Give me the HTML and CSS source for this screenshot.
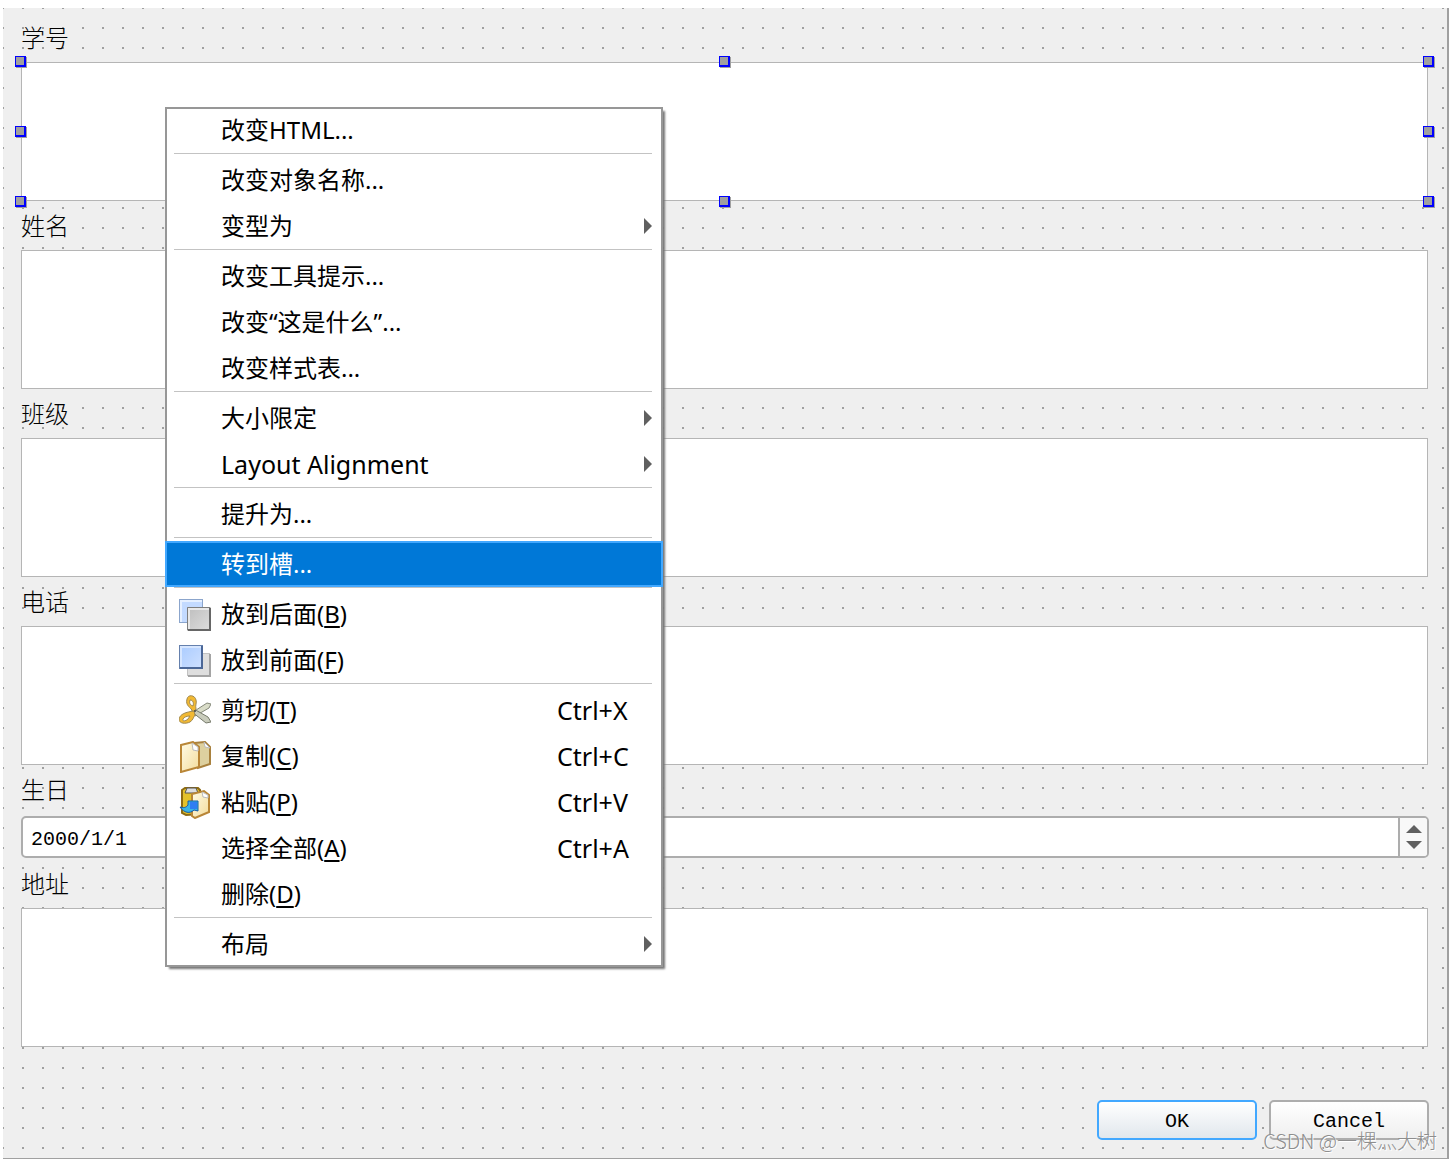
FILE: index.html
```html
<!DOCTYPE html>
<html lang="zh-CN">
<head>
<meta charset="utf-8">
<title>学生信息</title>
<link rel="stylesheet" href="styles.css">
</head>
<body>
<form class="dialog">
  <div class="fields">
    <label for="f-id">学号</label>
    <div class="selected">
      <textarea id="f-id" class="box"></textarea>
      <i class="handle left top"></i><i class="handle center top"></i><i class="handle right top"></i>
      <i class="handle left middle"></i><i class="handle right middle"></i>
      <i class="handle left bottom"></i><i class="handle center bottom"></i><i class="handle right bottom"></i>
    </div>
    <label for="f-name">姓名</label>
    <textarea id="f-name" class="box"></textarea>
    <label for="f-class">班级</label>
    <textarea id="f-class" class="box"></textarea>
    <label for="f-phone">电话</label>
    <textarea id="f-phone" class="box"></textarea>
    <label for="f-birth">生日</label>
    <div class="date">
      <input id="f-birth" type="text" value="2000/1/1">
      <div class="spin">
        <button type="button" aria-label="增加"><svg width="16" height="8"><path d="M0 8L8 0l8 8z"/></svg></button>
        <button type="button" aria-label="减少"><svg width="16" height="8"><path d="M0 0h16L8 8z"/></svg></button>
      </div>
    </div>
    <label for="f-addr">地址</label>
    <textarea id="f-addr" class="box"></textarea>
  </div>
  <div class="actions">
    <button type="button" class="btn primary">OK</button>
    <button type="button" class="btn">Cancel</button>
  </div>
</form>

<div class="menu" role="menu">
  <button class="item" role="menuitem"><span class="text">改变HTML...</span></button>
  <hr>
  <button class="item" role="menuitem"><span class="text">改变对象名称...</span></button>
  <button class="item" role="menuitem"><span class="text">变型为</span><svg class="arrow" width="8" height="16"><path d="M0 0l8 8-8 8z"/></svg></button>
  <hr>
  <button class="item" role="menuitem"><span class="text">改变工具提示...</span></button>
  <button class="item" role="menuitem"><span class="text">改变“这是什么”...</span></button>
  <button class="item" role="menuitem"><span class="text">改变样式表...</span></button>
  <hr>
  <button class="item" role="menuitem"><span class="text">大小限定</span><svg class="arrow" width="8" height="16"><path d="M0 0l8 8-8 8z"/></svg></button>
  <button class="item" role="menuitem"><span class="text latin">Layout Alignment</span><svg class="arrow" width="8" height="16"><path d="M0 0l8 8-8 8z"/></svg></button>
  <hr>
  <button class="item" role="menuitem"><span class="text">提升为...</span></button>
  <hr>
  <button class="item active" role="menuitem"><span class="text">转到槽...</span></button>
  <hr>
  <button class="item" role="menuitem">
    <svg class="icon" viewBox="0 0 32 32">
      <defs>
        <linearGradient id="blue" x2="1" y2="1"><stop stop-color="#a9cbff"/><stop offset="1" stop-color="#cfe1ff"/></linearGradient>
        <linearGradient id="grey" x2="1" y2="1"><stop stop-color="#bdbdbd"/><stop offset="1" stop-color="#dedede"/></linearGradient>
        <linearGradient id="paper" x2="1" y2="1"><stop stop-color="#fffbe6"/><stop offset="1" stop-color="#f3dc9c"/></linearGradient>
      </defs>
      <rect x=".5" y=".5" width="23" height="23" fill="#c3daff" stroke="#8ba5cc"/>
      <path d="M2 23V2h21" fill="none" stroke="#e6f0ff" stroke-width="2"/>
      <rect x="8" y="8" width="24" height="24" fill="url(#grey)"/>
      <path d="M10 30V10h20" fill="none" stroke="#e8e8e8" stroke-width="2"/>
      <path d="M8.500 31V8.500H31" fill="none" stroke="#7e7e7e"/><path d="M9 31h22V9" fill="none" stroke="#666" stroke-width="2"/>
    </svg>
    <span class="text">放到后面(<u>B</u>)</span></button>
  <button class="item" role="menuitem">
    <svg class="icon" viewBox="0 0 32 32">
      <rect x="8.500" y="8.500" width="22" height="22" fill="#dedede" stroke="#c2c2c2"/><path d="M9 31h22V9" fill="none" stroke="#a4a4a4" stroke-width="2"/>
      <rect x=".5" y=".5" width="23" height="23" fill="url(#blue)" stroke="#6580ad"/>
      <path d="M2 22V2h20" fill="none" stroke="#d6e6ff" stroke-width="2"/>
      <path d="M1 23h22V1" fill="none" stroke="#4b6797" stroke-width="2"/>
    </svg>
    <span class="text">放到前面(<u>F</u>)</span></button>
  <hr>
  <button class="item" role="menuitem">
    <svg class="icon" viewBox="0 0 32 32">
      <path d="M14 17L28 8l4 1-2 4-14 8z" fill="#d9dcc8" stroke="#84887a"/>
      <path d="M13 13l16 9 3 5-5 1-14-11z" fill="#c9ccbc" stroke="#777b6c"/>
      <path d="M8 4c1-5 8-4 9 1 1 3-1 5 0 9l-3 3c-2-5-8-6-6-13zm3 1c-1 3 0 5 3 6 1-3 0-6-3-6z" fill="#f2b933" stroke="#a08a52" fill-rule="evenodd"/>
      <path d="M0 24c1-5 7-7 15-8l1 4c-2 3-2 5-5 7-4 2-11 2-11-3zm4 0c-1 3 3 2 5 0l2-3c-3 0-6 1-7 3z" fill="#f2b933" stroke="#a08a52" fill-rule="evenodd"/>
      <circle cx="16" cy="16" r="1" fill="#444"/>
    </svg>
    <span class="text">剪切(<u>T</u>)</span><span class="key latin">Ctrl+X</span></button>
  <button class="item" role="menuitem">
    <svg class="icon" viewBox="0 0 32 32">
      <path d="M15 2l11-1 5 5v17l-12 4z" fill="#ddd09f" stroke="#a9813e" stroke-width="2"/><path d="M25 1l1 5 5 1z" fill="#fff" stroke="#bbb"/>
      <path d="M2 4L14 1l6 5v20L2 31z" fill="url(#paper)" stroke="#b98637" stroke-width="2"/><path d="M13 2l1 7 5 1V6z" fill="#fff" stroke="#bbb"/>
    </svg>
    <span class="text">复制(<u>C</u>)</span><span class="key latin">Ctrl+C</span></button>
  <button class="item" role="menuitem">
    <svg class="icon" viewBox="0 0 32 32">
      <path d="M3 3l3-2h13l2 2v24l-14 1-4-2z" fill="#e4c22a" stroke="#8d6a13" stroke-width="2"/><path d="M6 6l2-5h9l2 5z" fill="#ddd" stroke="#555"/>
      <path d="M13 7l12-3 5 4v17l-14 6-3-2z" fill="url(#paper)" stroke="#b98637" stroke-width="2"/><path d="M23 5l1 5 5 1V8z" fill="#fff" stroke="#bbb"/>
      <path d="M1 20c3 1 6 1 8-2V14h10v10l-4-1c-4 4-10 3-14-3z" fill="#39b4e6" stroke="#155aa5"/><path d="M11 15h7v7h-7z" fill="#2f7df2"/>
    </svg>
    <span class="text">粘贴(<u>P</u>)</span><span class="key latin">Ctrl+V</span></button>
  <button class="item" role="menuitem"><span class="text">选择全部(<u>A</u>)</span><span class="key latin">Ctrl+A</span></button>
  <button class="item" role="menuitem"><span class="text">删除(<u>D</u>)</span></button>
  <hr>
  <button class="item" role="menuitem"><span class="text">布局</span><svg class="arrow" width="8" height="16"><path d="M0 0l8 8-8 8z"/></svg></button>
</div>
<div class="watermark">CSDN @一棵灬大树</div>
</body>
</html>
```
FILE: styles.css
```css
* { box-sizing: border-box; }
body {
  margin: 0;
  padding: 8px 2px 0 3px;
  position: relative;
  background: #fff;
  color: #000;
}
button, input, textarea { font: inherit; color: inherit; border: 0; padding: 0; margin: 0; }
.dialog {
  padding: 17px 18px 18px 18px;
  border-right: 2px solid #a0a0a0;
  border-bottom: 1px solid #a0a0a0;
  background: #efefef conic-gradient(at 2px 2px, transparent 75%, #a0a0a0 0) -1px -1px / 20px 20px;
  font: 300 24px/25px "Liberation Mono", "Noto Sans CJK SC", monospace;
}
.fields { display: flex; flex-direction: column; gap: 12px; }
.fields label { align-self: flex-start; height: 25px; line-height: 31px; }
.box {
  display: block;
  width: calc(100% - 1px);
  height: 139px;
  border: 1px solid #b5b5b5;
  background: #fff;
  resize: none;
  outline: 0;
}
.selected { position: relative; }
.handle {
  position: absolute;
  width: 11px;
  height: 11px;
  background: #a0a0a0;
  border: solid #00f;
  border-width: 1px 2px 2px 1px;
  box-shadow: 1px 1px #a0a0a0;
}
.left { left: -6px; }
.center { left: calc(50% - 6px); }
.right { right: -5px; }
.top { top: -6px; }
.middle { top: calc(50% - 6px); }
.bottom { bottom: -6px; }
.date {
  display: flex;
  height: 42px;
  margin: 2px 0 1px;
  border: 2px solid #adadad;
  border-radius: 5px;
  background: #fff;
  overflow: hidden;
}
.date input { flex: 1; min-width: 0; padding: 4px 0 0 8px; font-size: 20px; background: none; outline: 0; }
.spin {
  width: 29px;
  display: flex;
  flex-direction: column;
  justify-content: center;
  gap: 8px;
  border-left: 2px solid #adadad;
  background: #f8f8f8;
}
.spin button { display: flex; justify-content: center; background: none; fill: #606060; }
.actions { display: flex; justify-content: flex-end; gap: 12px; margin-top: 53px; }
.btn {
  width: 160px;
  height: 40px;
  padding-top: 3px;
  border: 2px solid #adadad;
  border-radius: 5px;
  background: linear-gradient(#fff, #efefef);
  font-size: 20px;
}
.primary { border-color: #42a8ff; background: linear-gradient(#fff, #e1e7ed); }
.menu {
  position: absolute;
  left: 165px;
  top: 107px;
  width: 498px;
  background: #fff;
  box-shadow: inset 0 0 0 2px #979797, 3px 3px 2px -1px #777;
  font: 24px/46px "Noto Sans", "Noto Sans CJK SC", sans-serif;
}
.menu hr { height: 4px; margin: 0 11px 0 9px; border: 0; border-top: 1px solid #c3c3c3; }
.item {
  display: grid;
  grid-template-columns: 32px 1fr 77px 8px;
  column-gap: 10px;
  align-items: center;
  width: 100%;
  height: 46px;
  padding: 0 11px 0 14px;
  background: none;
  text-align: left;
  white-space: nowrap;
}
.icon { grid-column: 1; grid-row: 1; width: 32px; height: 32px; margin-top: 2px; }
.text { grid-column: 2; grid-row: 1; }
.text u { text-decoration-thickness: 2px; text-underline-offset: 3px; text-decoration-skip-ink: none; }
.key { grid-column: 3; grid-row: 1; }
.latin { font-size: 25px; }
.arrow { grid-column: 4; grid-row: 1; fill: #606060; }
.active { background: #0078d7; color: #fff; box-shadow: inset 0 0 0 2px #42a8ff; }
.watermark {
  position: absolute;
  right: 14px;
  bottom: 4px;
  color: #8e8e8e;
  font: 300 20px/28px "Noto Sans CJK SC", sans-serif;
  text-shadow: 1px 1px #fff;
}
```
